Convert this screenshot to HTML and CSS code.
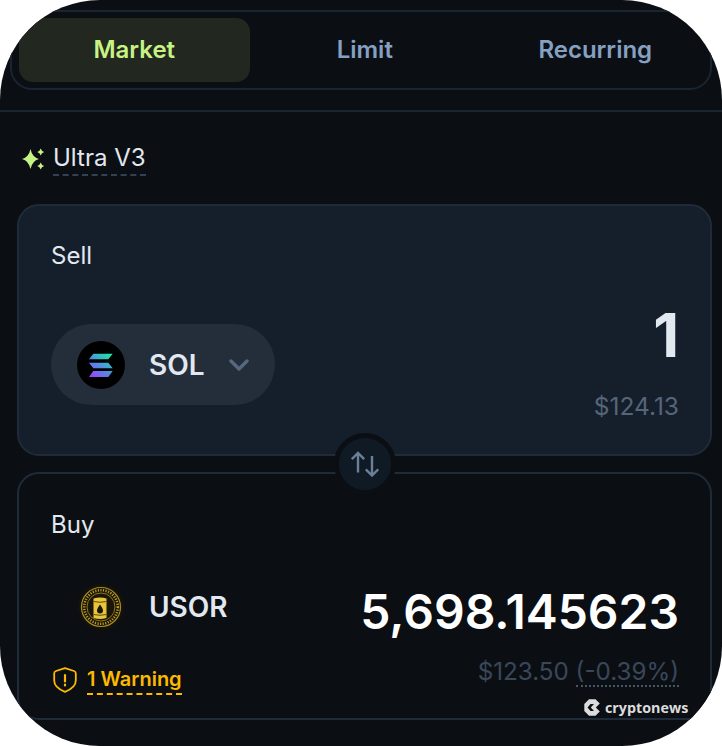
FILE: index.html
```html
<!DOCTYPE html>
<html lang="en">
<head>
<meta charset="utf-8">
<title>Swap</title>
<link rel="stylesheet" href="styles.css">
</head>
<body>
<main class="app">
  <nav class="tabs">
    <div class="tab tab-active">Market</div>
    <div class="tab">Limit</div>
    <div class="tab">Recurring</div>
  </nav>
  <hr class="divider">
  <div class="mode">
    <svg class="spark" viewBox="0 0 24 24" width="24" height="24"><path fill="#c7f284" d="M9.500 2Q11.200 10.200 18 12Q11.200 13.800 9.500 22Q7.800 13.800 1 12Q7.800 10.200 9.500 2z"/><path fill="#c7f284" d="M19.700 1.500Q20.500 4.200 23.200 5Q20.500 5.800 19.700 8.500Q18.900 5.800 16.200 5Q18.900 4.200 19.700 1.500zM19.700 15.500Q20.500 18.200 23.200 19Q20.500 19.800 19.700 22.500Q18.900 19.800 16.200 19Q18.900 18.200 19.700 15.500z"/></svg>
    <span class="mode-label">Ultra V3</span>
  </div>
  <div class="cards">
    <section class="card card-sell">
      <div class="card-title">Sell</div>
      <div class="row">
        <div class="token token-pill">
          <svg class="token-icon" viewBox="0 0 48 48" width="48" height="48">
            <defs><linearGradient id="sol" gradientUnits="userSpaceOnUse" x1="34" y1="12" x2="16" y2="36"><stop offset="0" stop-color="#14f1a0"/><stop offset=".55" stop-color="#4f90e0"/><stop offset="1" stop-color="#9945ff"/></linearGradient></defs>
            <circle cx="24" cy="24" r="24" fill="#000"/>
            <path fill="url(#sol)" d="M16.300 12.700H35.700L31.300 18.300H12zM12 21.700H31.300L35.700 27.300H16.300zM16.300 30H35.700L31.300 36H12z"/>
          </svg>
          <span class="token-name">SOL</span>
          <svg class="chevron" viewBox="0 0 20 12" width="20" height="12"><path d="M2 2l8 8 8-8" fill="none" stroke="#56677f" stroke-width="3.400" stroke-linecap="round" stroke-linejoin="round"/></svg>
        </div>
        <div class="amounts">
          <div class="amount amount-sell">1</div>
          <div class="usd">$124.13</div>
        </div>
      </div>
    </section>
    <section class="card card-buy">
      <div class="card-title">Buy</div>
      <div class="row row-buy">
        <div class="token-col">
          <div class="token">
            <svg class="token-icon" viewBox="0 0 48 48" width="48" height="48">
              <defs><radialGradient id="coinbg"><stop offset=".7" stop-color="#1c190f"/><stop offset="1" stop-color="#0e0e0c"/></radialGradient></defs>
              <circle cx="24" cy="24" r="24" fill="url(#coinbg)"/>
              <circle cx="24" cy="24" r="19.500" fill="#191507" stroke="#a88c24" stroke-width="1.200"/>
              <circle cx="24" cy="24" r="16.800" fill="none" stroke="#b89a26" stroke-width="2.600" stroke-dasharray="1.200 1.400"/>
              <circle cx="24" cy="24" r="14" fill="#1a1608" stroke="#8f771e" stroke-width="1"/>
              <path fill="#e8c638" d="M16.500 15.500Q23 13.500 29.500 15.500V35Q23 37 16.500 35z"/>
              <path fill="none" stroke="#5c4b10" stroke-width="1" d="M16.500 18.500Q23 20 29.500 18.500M16.500 31.500Q23 33 29.500 31.500"/>
              <path fill="#1a1608" d="M23 21.500Q26 25.500 26 27.500A3 3 0 0 1 20 27.500Q20 25.500 23 21.500z"/>
            </svg>
            <span class="token-name">USOR</span>
          </div>
          <div class="warning">
            <svg class="shield" viewBox="0 0 24 26" width="24" height="26"><path d="M12 1.200L21 4Q22.800 4.600 22.800 6.500V13.500C22.800 18.500 18 22.500 12 24.800C6 22.500 1.200 18.500 1.200 13.500V6.500Q1.200 4.600 3 4z" fill="none" stroke="#fcb900" stroke-width="1.800" stroke-linejoin="round"/><path d="M12 8v6.500M12 17.500v1" stroke="#fcb900" stroke-width="2.200" stroke-linecap="round"/></svg>
            <span class="warning-label">1 Warning</span>
          </div>
        </div>
        <div class="amounts">
          <div class="amount amount-buy">5,698.145623</div>
          <div class="usd usd-buy">$123.50 <span class="impact">(-0.39%)</span></div>
        </div>
      </div>
    </section>
    <div class="swap">
      <svg viewBox="0 0 28 26" width="28" height="26"><path d="M7 21.500V2M.800 8.200L7 2l6.200 6.200M21 5v19.500M14.800 18.300L21 24.500l6.200-6.200" fill="none" stroke="#6b7f99" stroke-width="2.400"/></svg>
    </div>
  </div>
  <div class="watermark">
    <svg viewBox="0 0 16 17" width="16" height="17"><path fill="#dcdcdc" d="M5 .300H11.500L15.800 4.500 11.800 8.500 15.800 12.500 11.500 16.700H5L.300 12V5z"/><path fill="#0b0f14" d="M6.500 5H10L6.800 8.500 10 12H6.500L3.500 8.500z"/></svg>
    <span>cryptonews</span>
  </div>
</main>
</body>
</html>
```
FILE: styles.css
```css
* { box-sizing: border-box; }
html, body { margin: 0; padding: 0; background: #fff; }
body { font-family: Inter, "Liberation Sans", sans-serif; }
.app {
  position: relative;
  width: 722px;
  height: 746px;
  overflow: hidden;
  background: #0b0f14;
  border-radius: 100px;
  padding-top: 10px;
}
.tabs {
  display: grid;
  grid-template-columns: repeat(3, 230.500px);
  height: 80px;
  margin: 0 10px;
  padding: 6px 0 6px 7px;
  border: 2px solid #1a2533;
  border-radius: 22px;
}
.tab {
  display: flex;
  align-items: center;
  justify-content: center;
  padding-bottom: 2px;
  border-radius: 14px;
  font-size: 24px;
  font-weight: 600;
  color: #86a0c2;
}
.tab-active { background: #22281f; color: #c7f284; }
.divider {
  height: 2px;
  margin: 20px 0 0;
  border: 0;
  background: #1a2533;
}
.mode {
  display: flex;
  align-items: center;
  gap: 8px;
  height: 54px;
  margin: 20px 0 0 21px;
}
.spark { flex: none; margin-bottom: 1px; }
.mode-label {
  font-size: 24px;
  line-height: 32px;
  color: #e2e8f0;
  border-bottom: 2px dashed #334155;
}
.cards {
  position: relative;
  display: flex;
  flex-direction: column;
  gap: 16px;
  margin: 18px 10px 0 17px;
}
.card {
  border: 2px solid #202b3a;
  border-radius: 22px;
  padding: 0 31px 0 32px;
}
.card-sell { height: 252px; background: #151e2b; }
.card-buy { height: 248px; background: #0b0f14; }
.card-title {
  margin-top: 34px;
  font-size: 24px;
  line-height: 32px;
  color: #e2e8f0;
}
.card-buy .card-title { margin-top: 35px; }
.row {
  display: flex;
  justify-content: space-between;
  align-items: flex-start;
  margin-top: 52px;
}
.row-buy { margin-top: 25px; }
.token {
  display: flex;
  align-items: center;
  height: 81px;
  width: 224px;
  padding-left: 26px;
  gap: 24px;
}
.token-pill { background: #242e3b; border-radius: 41px; }
.token-icon { flex: none; }
.token-name {
  font-size: 28px;
  font-weight: 600;
  color: #e2e8f0;
}
.chevron { flex: none; }
.amounts { text-align: right; }
.amount { font-weight: 600; }
.amount-sell {
  font-size: 60px;
  font-weight: 700;
  line-height: 64px;
  margin-top: -21px;
  color: #e2e8f0;
}
.amount-buy {
  margin-top: 14px;
  font-size: 48px;
  line-height: 64px;
  color: #fff;
}
.usd {
  margin-top: 23px;
  font-size: 24.500px;
  line-height: 32px;
  color: #566579;
}
.usd-buy { margin-top: 12px; font-size: 24.200px; color: #3a4759; }
.impact { display: inline-block; line-height: 26px; border-bottom: 2px dotted #475569; }
.token-col { display: flex; flex-direction: column; }
.warning {
  display: flex;
  align-items: center;
  gap: 10px;
  margin: 18px 0 0 2px;
}
.warning-label {
  font-size: 20px;
  font-weight: 600;
  line-height: 28px;
  color: #fcb900;
  border-bottom: 2px dashed #fcb900;
}
.swap {
  position: absolute;
  left: 317px;
  top: 229px;
  display: flex;
  align-items: center;
  justify-content: center;
  width: 62px;
  height: 62px;
  border: 5px solid #0b0f14;
  border-radius: 50%;
  background: #101a25;
}
.watermark {
  position: absolute;
  left: 584px;
  top: 698px;
  display: flex;
  align-items: center;
  gap: 5px;
  font-size: 14.300px;
  font-weight: 700;
  color: #dcdcdc;
  font-family: "Open Sans", sans-serif;
}
```
